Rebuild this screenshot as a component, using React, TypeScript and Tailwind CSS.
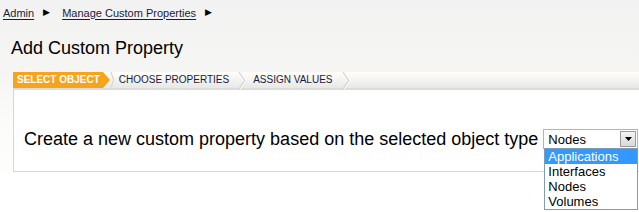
import React from 'react';

const font = { fontFamily: '"Liberation Sans", Arial, sans-serif' };

function Crumb({ label }: { label: string }) {
  return (
    <div className="flex items-center">
      <a className="text-[11px] leading-[14px] text-[#1c1c3c] underline underline-offset-[2px]">{label}</a>
      <span className="ml-[9px] mr-[12px] text-[9px] leading-none text-black">▶</span>
    </div>
  );
}

function Separator() {
  return (
    <svg width="9" height="17" viewBox="0 0 9 17" className="ml-[9px] mr-[6px] shrink-0">
      <polyline points="1,0 7,8.5 1,17" fill="none" stroke="#d2d2ce" strokeWidth="1.2" />
      <polyline points="2.3,0 8.3,8.5 2.3,17" fill="none" stroke="#ffffff" strokeWidth="1" />
    </svg>
  );
}

const options = ['Applications', 'Interfaces', 'Nodes', 'Volumes'];

export default function App() {
  return (
    <div
      className="relative h-[212px] w-[639px] overflow-hidden bg-[linear-gradient(to_bottom,#f2f2f2,#f5f5f3_70px,#fbfbfa_120px,#fdfdfc_170px,#ffffff_172px)]"
      style={font}
    >
      {/* breadcrumb */}
      <div className="flex h-[24px] items-center pl-[3px] pt-[1px]">
        <Crumb label="Admin" />
        <Crumb label="Manage Custom Properties" />
      </div>

      {/* title */}
      <h1 className="mt-[13px] pl-[11px] text-[18px] leading-[22px] text-black">Add Custom Property</h1>

      {/* wizard steps */}
      <div className="ml-[13px] mt-[13px] flex h-[18px] items-stretch border-b-2 border-[#dcdcd8] bg-[linear-gradient(to_bottom,#fffefa,#f3f3f1_50%,#e7e7e5)]">
        <div className="flex items-center bg-[#f8a31c] pl-[4px] pr-[3px] text-[10px] font-bold leading-none text-white">
          SELECT OBJECT
        </div>
        <svg width="12" height="16" viewBox="0 0 12 16" className="shrink-0">
          <polygon points="0,0 7,8 0,16" fill="#f8a31c" />
          <polyline points="8,0 10.5,8 8,16" fill="none" stroke="#d8d8d4" strokeWidth="1.3" />
        </svg>
        <div className="ml-[4px] flex items-center text-[10px] leading-none text-[#1a1a3a]">CHOOSE PROPERTIES</div>
        <Separator />
        <div className="flex items-center text-[10px] leading-none text-[#1a1a3a]">ASSIGN VALUES</div>
        <Separator />
      </div>

      {/* content */}
      <div className="ml-[13px] h-[82px] border-b border-l border-[#d6d6d4] bg-white">
        <div className="flex items-center pl-[10px] pt-[38px]">
          <span className="shrink-0 whitespace-nowrap text-[18px] leading-[22px] text-black">
            Create a new custom property based on the selected object type
          </span>
          <div className="relative ml-[5px] shrink-0">
            <div className="flex h-[20px] w-[95px] items-center border border-[#e6ad4f] bg-white pl-[4px]">
              <span className="text-[13px] leading-none text-black">Nodes</span>
              <div className="ml-auto mr-[1px] flex h-[16px] w-[16px] items-center justify-center border border-[#9a9a9a] bg-[linear-gradient(to_bottom,#f4f4f4,#d9d9d9)]">
                <svg width="7" height="4" viewBox="0 0 7 4">
                  <polygon points="0,0 7,0 3.5,4" fill="#000" />
                </svg>
              </div>
            </div>
            <ul className="absolute left-[1px] top-[19px] w-[94px] border border-[#7f9db9] bg-white">
              {options.map((o, i) => (
                <li
                  key={o}
                  className={
                    i === 0
                      ? 'h-[15px] bg-[#3399ff] pl-[3px] text-[13px] leading-[15px] text-white'
                      : 'h-[15px] pl-[3px] text-[13px] leading-[15px] text-black'
                  }
                >
                  {o}
                </li>
              ))}
            </ul>
          </div>
        </div>
      </div>
    </div>
  );
}
